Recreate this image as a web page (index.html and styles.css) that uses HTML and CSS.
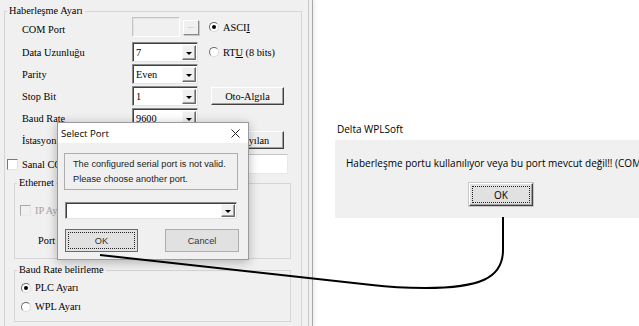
FILE: index.html
```html
<!DOCTYPE html>
<html lang="tr">
<head>
  <meta charset="UTF-8" />
  <title>Haberleşme Ayarı | Delta WPLSoft</title>
  <meta name="viewport" content="width=device-width, initial-scale=1.0" />
  <link rel="stylesheet" href="styles.css">
</head>
<body>

  <div class="screen">
    <div class="panel">
      <div class="panel-inner">
        <fieldset class="group main">
          <legend>Haberleşme Ayarı</legend>

          <div class="form-grid">
            <span class="lbl">COM Port</span>
            <div class="port">
              <span class="port-box"></span>
              <span class="browse">...</span>
            </div>
            <label class="opt top"><span class="radio on"></span><span>ASCI<u>I</u></span></label>

            <span class="lbl">Data Uzunluğu</span>
            <div class="combo"><span class="value">7</span><span class="drop"></span></div>
            <label class="opt"><span class="radio"></span><span>RT<u>U</u> (8 bits)</span></label>

            <span class="lbl">Parity</span>
            <div class="combo"><span class="value">Even</span><span class="drop"></span></div>
            <span></span>

            <span class="lbl">Stop Bit</span>
            <div class="combo"><span class="value">1</span><span class="drop"></span></div>
            <button class="btn">Oto-Algıla</button>

            <span class="lbl">Baud Rate</span>
            <div class="combo"><span class="value">9600</span><span class="drop"></span></div>
            <span></span>

            <span class="lbl">İstasyon No</span>
            <div class="combo"><span class="value">1</span></div>
            <button class="btn">Varsayılan</button>
          </div>

          <div class="sanal">
            <span class="check"></span>
            <span class="lbl">Sanal COM</span>
            <span class="textbox"></span>
          </div>

          <fieldset class="group sub ethernet">
            <legend>Ethernet</legend>
            <div class="eth-row">
              <span class="check off"></span>
              <span class="disabled">IP Ayarı</span>
            </div>
            <div class="eth-port">Port</div>
          </fieldset>

          <fieldset class="group sub baud">
            <legend>Baud Rate belirleme</legend>
            <label class="opt row"><span class="radio on"></span><span>PLC Ayarı</span></label>
            <label class="opt row"><span class="radio"></span><span>WPL Ayarı</span></label>
          </fieldset>
        </fieldset>
      </div>
    </div>

    <div class="desktop"></div>

    <!-- Select Port dialog -->
    <div class="dlg">
      <div class="dlg-title">
        <span>Select Port</span>
        <svg class="close" width="9" height="9" viewBox="0 0 9 9">
          <path d="M0.5 0.5 L8.5 8.5 M8.5 0.5 L0.5 8.5" stroke="#222" stroke-width="1" fill="none" />
        </svg>
      </div>
      <div class="dlg-body">
        <div class="msg">
          The configured serial port is not valid.<br>
          Please choose another port.
        </div>
        <div class="combo wide"><span class="value"></span><span class="drop"></span></div>
        <div class="dlg-buttons">
          <button class="wbtn focus">OK</button>
          <button class="wbtn">Cancel</button>
        </div>
      </div>
    </div>

    <!-- Delta WPLSoft message box -->
    <div class="msgbox">
      <div class="msgbox-title">Delta WPLSoft</div>
      <div class="msgbox-body">
        <div class="msgbox-text">Haberleşme portu kullanılıyor veya bu port mevcut değil!! (COM</div>
        <button class="msgbox-ok">OK</button>
      </div>
    </div>

    <svg class="arrow" width="639" height="326" viewBox="0 0 639 326">
      <path d="M100 255 L372 285 C392 287.5 405 288 425 288 C480 288 503 278 503 250 L503 217"
            stroke="#000" stroke-width="2" fill="none" />
    </svg>
  </div>

</body>
</html>
```

FILE: styles.css
```css
body {
  margin: 0;
  background: #fff;
  font-family: "Liberation Serif", serif;
  font-size: 10.3px;
  color: #000;
}

.screen {
  position: relative;
  width: 639px;
  height: 326px;
  overflow: hidden;
  display: flex;
}

/* left settings window */
.panel {
  flex: none;
  width: 312px;
  height: 100%;
  background: #f0f0f0;
  border-right: 1px solid #a8a8a8;
  box-shadow: 2px 0 4px rgba(0, 0, 0, 0.08);
}

.panel-inner {
  width: 309px;
  height: 100%;
  box-sizing: border-box;
  padding-top: 5px;
  border-right: 1px solid #c8c8c8;
}

.desktop {
  flex: 1;
}

.group {
  margin: 0;
  padding: 0;
  min-width: 0;
  border: 1px solid #d5d5d5;
  box-sizing: border-box;
}

.group legend {
  padding: 0 2px;
  margin-left: 2px;
  line-height: 12px;
}

.main {
  margin-left: 4px;
  width: 298px;
  height: 340px;
}

.form-grid {
  display: grid;
  grid-template-columns: 110px 77px 80px;
  grid-template-rows: 24px repeat(5, 22px);
  margin-left: 17px;
  align-items: center;
}

.form-grid .combo {
  width: 66px;
}

.lbl {
  white-space: nowrap;
}

.port {
  display: flex;
  align-items: center;
  gap: 3px;
  align-self: start;
}

.port-box {
  width: 48px;
  height: 20px;
  box-sizing: border-box;
  background: #f0f0f0;
  border: 1px solid;
  border-color: #c4c4c4 #fff #fff #c4c4c4;
  box-shadow: inset 1px 1px #e3e3e3;
}

.browse {
  width: 16px;
  height: 15px;
  box-sizing: border-box;
  border: 1px solid;
  border-color: #fff #8a8a8a #8a8a8a #fff;
  box-shadow: 1px 1px #c8c8c8;
  color: #999;
  font-size: 8px;
  line-height: 10px;
  text-align: center;
}

.opt {
  display: flex;
  align-items: center;
  gap: 4px;
  white-space: nowrap;
}

.opt.top {
  align-self: start;
  height: 20px;
}

.radio {
  flex: none;
  position: relative;
  width: 10px;
  height: 10px;
  box-sizing: border-box;
  border-radius: 50%;
  background: #fff;
  border: 1px solid;
  border-color: #6c6c6c #d8d8d8 #d8d8d8 #6c6c6c;
}

.radio.on::after {
  content: "";
  position: absolute;
  left: 2px;
  top: 2px;
  width: 4px;
  height: 4px;
  border-radius: 50%;
  background: #000;
}

.combo {
  display: flex;
  align-items: stretch;
  height: 20px;
  box-sizing: border-box;
  background: #fff;
  border: 1px solid;
  border-color: #8a8a8a #e3e3e3 #e3e3e3 #8a8a8a;
  box-shadow: inset 1px 1px #404040;
  padding: 2px 1px 1px 3px;
}

.combo .value {
  flex: 1;
  line-height: 15px;
}

.drop {
  flex: none;
  position: relative;
  width: 14px;
  box-sizing: border-box;
  background: #f0f0f0;
  border: 1px solid;
  border-color: #f8f8f8 #6a6a6a #6a6a6a #f8f8f8;
  box-shadow: inset -1px -1px #a0a0a0;
}

.drop::after {
  content: "";
  position: absolute;
  left: 3px;
  top: 50%;
  margin-top: -1px;
  border-left: 3px solid transparent;
  border-right: 3px solid transparent;
  border-top: 3px solid #000;
}

.btn {
  width: 73px;
  height: 18px;
  margin-left: 2px;
  padding: 0;
  background: #f0f0f0;
  border: 1px solid;
  border-color: #fff #404040 #404040 #fff;
  box-shadow: inset -1px -1px #a0a0a0;
  font-family: "Liberation Serif", serif;
  font-size: 10.3px;
  color: #000;
}

.sanal {
  display: flex;
  align-items: center;
  height: 26px;
  margin-left: 2px;
}

.check {
  flex: none;
  width: 11px;
  height: 11px;
  box-sizing: border-box;
  background: #fff;
  border: 1px solid;
  border-color: #7a7a7a #e3e3e3 #e3e3e3 #7a7a7a;
  margin-right: 4px;
}

.check.off {
  background: #f0f0f0;
  border-color: #a8a8a8 #e8e8e8 #e8e8e8 #a8a8a8;
}

.sanal .lbl {
  width: 110px;
}

.textbox {
  width: 156px;
  height: 20px;
  box-sizing: border-box;
  background: #fff;
  border: 1px solid;
  border-color: #c4c4c4 #e8e8e8 #e8e8e8 #c4c4c4;
}

.sub {
  margin-left: 9px;
  width: 277px;
}

.ethernet {
  height: 82px;
}

.eth-row {
  display: flex;
  align-items: center;
  height: 20px;
  margin: 11px 0 0 5px;
}

.disabled {
  color: #a0a0a0;
}

.eth-port {
  height: 20px;
  line-height: 20px;
  margin: 11px 0 0 23px;
}

.baud {
  margin-top: 5px;
  height: 58px;
}

.opt.row {
  height: 19px;
  margin-left: 6px;
}

.baud .opt.row:first-of-type {
  margin-top: 2px;
}

/* Select Port dialog */
.dlg {
  position: absolute;
  left: 57px;
  top: 122px;
  width: 192px;
  box-sizing: border-box;
  background: #f0f0f0;
  border: 1px solid #9a9a9a;
  box-shadow: 0 2px 10px rgba(0, 0, 0, 0.28);
  font-family: "Liberation Sans", sans-serif;
  font-size: 9.2px;
  color: #222;
}

.dlg-title {
  height: 20px;
  display: flex;
  align-items: center;
  justify-content: space-between;
  padding: 0 8px 0 3px;
  background: #fff;
  font-family: "Open Sans", sans-serif;
  font-size: 9.6px;
  color: #000;
}

.dlg-body {
  padding: 10px 10px 7px 6px;
}

.msg {
  height: 37px;
  box-sizing: border-box;
  padding: 3px 0 0 8px;
  line-height: 15px;
  border: 1px solid #adadad;
  white-space: nowrap;
}

.combo.wide {
  height: 17px;
  margin: 12px 1px 0;
  padding: 1px 1px 1px 3px;
}

.dlg-buttons {
  display: flex;
  justify-content: space-between;
  margin: 10px -1px 0 1px;
}

.wbtn {
  width: 73px;
  height: 23px;
  padding: 0;
  background: #e1e1e1;
  border: 1px solid #adadad;
  font-family: "Liberation Sans", sans-serif;
  font-size: 9.2px;
  color: #333;
}

.wbtn + .wbtn {
  width: 74px;
}

.wbtn.focus {
  border-color: #6a6a6a;
  outline: 1px dotted #222;
  outline-offset: -4px;
}

/* Delta WPLSoft message box */
.msgbox {
  position: absolute;
  left: 335px;
  top: 118px;
  width: 332px;
  font-family: "Open Sans", sans-serif;
  font-size: 10px;
  color: #000;
}

.msgbox-title {
  height: 22px;
  line-height: 22px;
  padding-left: 2px;
  background: #fff;
}

.msgbox-body {
  height: 78px;
  box-sizing: border-box;
  padding: 16px 11px 0;
  background: #f0f0f0;
}

.msgbox-text {
  line-height: 15px;
  white-space: nowrap;
}

.msgbox-ok {
  display: block;
  width: 64px;
  height: 23px;
  margin: 12px auto 0;
  padding: 0;
  background: #e1e1e1;
  border: 1px solid;
  border-color: #fff #404040 #404040 #fff;
  box-shadow: inset -1px -1px #a0a0a0, 0 0 0 1px #c8c8c8;
  outline: 1px dotted #222;
  outline-offset: -4px;
  font-family: "Open Sans", sans-serif;
  font-size: 10px;
  color: #000;
}

.arrow {
  position: absolute;
  left: 0;
  top: 0;
  pointer-events: none;
}
```
